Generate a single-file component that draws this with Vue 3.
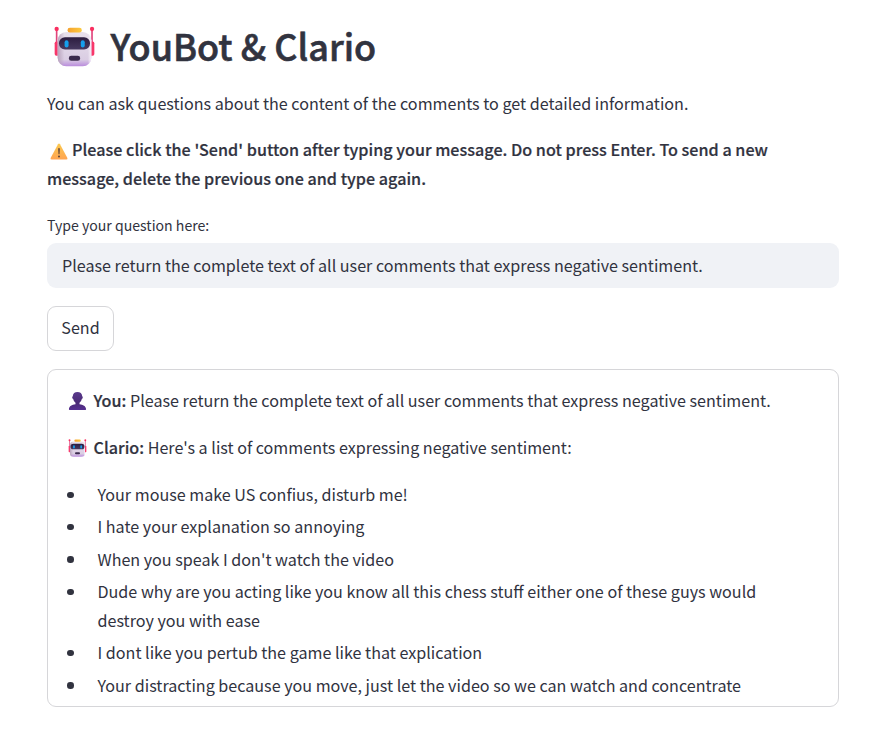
<template>
  <svg class="sprite" aria-hidden="true">
    <defs>
      <linearGradient id="head" x1="0" y1="0" x2="0" y2="1">
        <stop offset="0" stop-color="#e9e1ec" />
        <stop offset="0.8" stop-color="#dacde3" />
        <stop offset="1" stop-color="#b98bdc" />
      </linearGradient>
      <linearGradient id="side" x1="0" y1="0" x2="1" y2="0">
        <stop offset="0" stop-color="#b9a4bd" />
        <stop offset="0.2" stop-color="#b9a4bd" stop-opacity="0" />
        <stop offset="0.9" stop-color="#fff" stop-opacity="0" />
        <stop offset="1" stop-color="#f5e9fa" />
      </linearGradient>
      <linearGradient id="hat" x1="0" y1="0" x2="1" y2="0">
        <stop offset="0" stop-color="#f5a12e" />
        <stop offset="1" stop-color="#fcca3f" />
      </linearGradient>
      <linearGradient id="visor" x1="0" y1="0" x2="0" y2="1">
        <stop offset="0" stop-color="#2c1d3f" />
        <stop offset="1" stop-color="#473a61" />
      </linearGradient>
      <linearGradient id="sign" x1="0" y1="0" x2="0" y2="1">
        <stop offset="0" stop-color="#fbc94f" />
        <stop offset="1" stop-color="#ffa451" />
      </linearGradient>
      <linearGradient id="bust" x1="0" y1="0" x2="0" y2="1">
        <stop offset="0" stop-color="#5a3a8c" />
        <stop offset="0.6" stop-color="#4a2a76" />
        <stop offset="1" stop-color="#573092" />
      </linearGradient>
    </defs>
    <symbol id="robot" viewBox="28 20 124 122">
      <path d="M36 30V72M143 30V72" stroke="#e0457c" stroke-width="5" />
      <circle cx="36" cy="28" r="6.5" fill="#f92f60" />
      <circle cx="143" cy="28" r="6.5" fill="#f92f60" />
      <rect x="30" y="66" width="16" height="43" rx="5" fill="#f8376a" />
      <rect x="134" y="66" width="16" height="43" rx="5" fill="#f8376a" />
      <rect x="39" y="37" width="102" height="104" rx="26" fill="url(#head)" />
      <rect x="39" y="37" width="102" height="104" rx="26" fill="url(#side)" />
      <rect x="69" y="24" width="43" height="15" rx="7" fill="url(#hat)" />
      <rect x="43" y="53" width="94" height="37" rx="18" fill="url(#visor)" />
      <rect x="60" y="62" width="12" height="22" rx="6" fill="#159eed" />
      <rect x="109" y="62" width="12" height="22" rx="6" fill="#159eed" />
      <rect x="73" y="109" width="34" height="15" rx="7" fill="#3b2b4d" />
    </symbol>
    <symbol id="warning" viewBox="0 0 18 17">
      <path d="M8 1.2Q9 0 10 1.2L17.4 15Q17.9 16.6 16.2 16.6H1.8Q.1 16.6.6 15Z" fill="url(#sign)" />
      <path d="M8.2 5.4Q9 4.6 9.8 5.4L9.5 11.2H8.5Z" fill="#5b4038" />
      <circle cx="9" cy="13.4" r="1" fill="#5b4038" />
    </symbol>
    <symbol id="person" viewBox="0 0 18 18">
      <path d="M9 0C11.7 0 13.7 1.5 13.7 4.3C14.6 4.4 14.5 6.9 13.3 7.1C12.9 8.9 12 10 11 10.7V12.2C14.6 12.7 17.3 13.9 17.6 17.2Q17.6 18 16.9 18H1.1Q.4 18 .4 17.2C.7 13.9 3.4 12.7 7 12.2V10.7C6 10 5.1 8.9 4.7 7.1C3.5 6.9 3.4 4.4 4.3 4.3C4.3 1.5 6.3 0 9 0Z" fill="url(#bust)" />
    </symbol>
  </svg>

  <main class="page">
    <h1 class="title">
      <svg class="logo"><use href="#robot" /></svg>
      <span>YouBot &amp; Clario</span>
    </h1>

    <p class="intro">You can ask questions about the content of the comments to get detailed information.</p>
    <p class="notice">
      <svg class="warning"><use href="#warning" /></svg>
      <strong>Please click the 'Send' button after typing your message. Do not press Enter. To send a new message, delete the previous one and type again.</strong>
    </p>

    <label class="label" for="question">Type your question here:</label>
    <input id="question" v-model="question" class="input" type="text" autocomplete="off" spellcheck="false" />

    <button class="send" type="button" @click="send">Send</button>

    <section class="chat">
      <p class="message">
        <svg class="avatar"><use href="#person" /></svg>
        <span><strong>You:</strong> {{ asked }}</span>
      </p>
      <p class="message">
        <svg class="avatar"><use href="#robot" /></svg>
        <span><strong>Clario:</strong> Here's a list of comments expressing negative sentiment:</span>
      </p>
      <ul class="comments">
        <li v-for="comment in comments" :key="comment">{{ comment }}</li>
      </ul>
    </section>
  </main>
</template>

<script setup>
import { ref } from 'vue'

const question = ref('Please return the complete text of all user comments that express negative sentiment.')
const asked = ref(question.value)

const comments = [
  'Your mouse make US confius, disturb me!',
  'I hate your explanation so annoying',
  "When you speak I don't watch the video",
  'Dude why are you acting like you know all this chess stuff either one of these guys would destroy you with ease',
  'I dont like you pertub the game like that explication',
  'Your distracting because you move, just let the video so we can watch and concentrate'
]

const send = () => {
  asked.value = question.value
}
</script>

<style>
body {
  margin: 0;
  background: #ffffff;
}
</style>

<style scoped>
.sprite {
  position: absolute;
  width: 0;
  height: 0;
}

.page {
  box-sizing: border-box;
  width: 839px;
  padding: 19px 0 0 47px;
  color: #31333f;
  font-family: "Noto Sans CJK SC", "Open Sans", sans-serif;
  font-size: 16.12px;
  line-height: 28.8px;
}

.title {
  display: flex;
  align-items: center;
  height: 55px;
  margin: 0;
  font-size: 36px;
  font-weight: 500;
  line-height: 53px;
  -webkit-text-stroke: 0.6px #31333f;
}

.title span {
  padding-bottom: 2px;
}

strong {
  font-weight: 500;
  letter-spacing: 0.025px;
  -webkit-text-stroke: 0.2px #31333f;
}

.logo {
  width: 41px;
  height: 41px;
  margin: 0 15.5px 0 7px;
}

p {
  margin: 0 0 18px;
}

.intro {
  margin-top: 15px;
}

.notice {
  margin-top: -1px;
  margin-bottom: 19px;
}

.warning {
  width: 18px;
  height: 17px;
  margin: 0 4px 0 3px;
  vertical-align: -4px;
}

.label {
  display: block;
  margin-bottom: 4px;
  font-size: 14.1px;
  line-height: 28px;
}

.input {
  display: block;
  box-sizing: border-box;
  width: 100%;
  height: 45px;
  padding: 0 15px 2px;
  border: 0;
  border-radius: 9px;
  outline: none;
  background: #f0f2f6;
  color: inherit;
  font: inherit;
}

.send {
  display: block;
  width: 67px;
  height: 45px;
  margin-top: 18px;
  padding: 0 0 2px;
  border: 1px solid #d6d6d9;
  border-radius: 9px;
  background: #ffffff;
  color: inherit;
  font: inherit;
}

.chat {
  box-sizing: border-box;
  height: 338px;
  margin-top: 18px;
  padding: 16px 18px 0 19px;
  border: 1px solid #d6d6d9;
  border-radius: 9px;
}

.message {
  display: flex;
  align-items: center;
}

.avatar {
  width: 19px;
  height: 18px;
  margin: 0 6.5px 0 1px;
}

.comments {
  margin: 0;
  padding: 0;
  list-style: none;
}

.comments li {
  display: flex;
  margin-bottom: 3.6px;
  padding-right: 40px;
}

.comments li::before {
  content: "";
  flex: none;
  width: 6.5px;
  height: 6.5px;
  margin: 11.6px 24px 0 0;
  border-radius: 50%;
  background: #31333f;
}
</style>
